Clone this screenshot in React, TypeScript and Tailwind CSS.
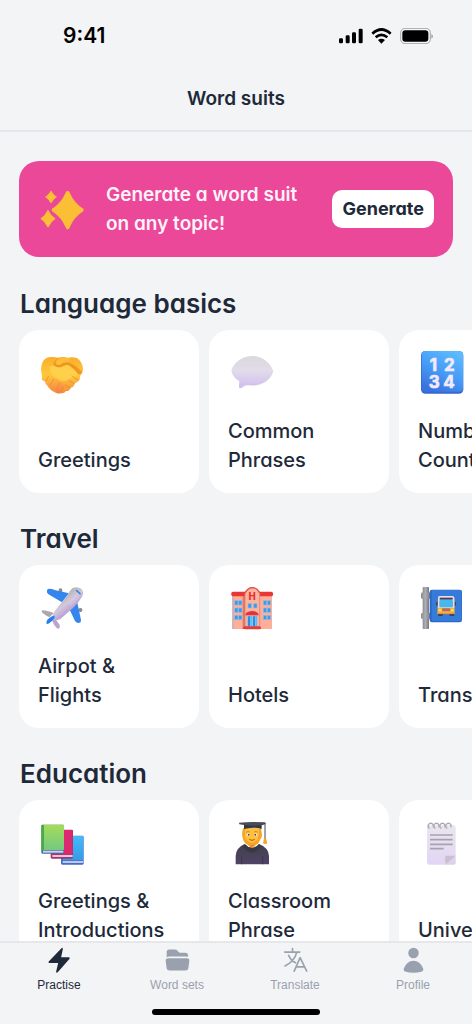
import type { ReactNode } from "react";

function Sparkles() {
  const star = (cx: number, cy: number, w: number, h: number) => {
    const a = w * 0.4;
    const b = h * 0.4;
    return `M${cx} ${cy - h}Q${cx + w * 0.1} ${cy - h} ${cx + w * 0.16} ${cy - h * 0.84}Q${cx + a} ${cy - b} ${cx + w * 0.86} ${cy - h * 0.13}Q${cx + w} ${cy - h * 0.08} ${cx + w} ${cy}Q${cx + w} ${cy + h * 0.08} ${cx + w * 0.86} ${cy + h * 0.13}Q${cx + a} ${cy + b} ${cx + w * 0.16} ${cy + h * 0.84}Q${cx + w * 0.1} ${cy + h} ${cx} ${cy + h}Q${cx - w * 0.1} ${cy + h} ${cx - w * 0.16} ${cy + h * 0.84}Q${cx - a} ${cy + b} ${cx - w * 0.86} ${cy + h * 0.13}Q${cx - w} ${cy + h * 0.08} ${cx - w} ${cy}Q${cx - w} ${cy - h * 0.08} ${cx - w * 0.86} ${cy - h * 0.13}Q${cx - a} ${cy - b} ${cx - w * 0.16} ${cy - h * 0.84}Q${cx - w * 0.1} ${cy - h} ${cx} ${cy - h}Z`;
  };
  return (
    <svg viewBox="114 105 144 144" className="size-12 shrink-0" fill="#fbbf35" aria-hidden="true">
      <path d={star(203, 180, 48, 58)} />
      <path d={star(153, 141, 17, 19)} />
      <path d={star(144, 206, 22, 26)} />
    </svg>
  );
}

function Handshake() {
  return (
    <svg viewBox="114 207 144 144" className="size-12" aria-hidden="true">
      <defs>
        <linearGradient id="hand" x1="0" y1="0" x2="0" y2="1">
          <stop offset="0" stopColor="#f8ad2a" />
          <stop offset="0.5" stopColor="#ffc83d" />
          <stop offset="1" stopColor="#f58a3c" />
        </linearGradient>
        <linearGradient id="finger" gradientUnits="userSpaceOnUse" x1="155" y1="285" x2="165" y2="340">
          <stop offset="0" stopColor="#ffc63a" />
          <stop offset="1" stopColor="#f77d4b" />
        </linearGradient>
      </defs>
      <path fill="url(#hand)" d="M145 232Q158 229 174 233Q188 229 203 233Q220 229 232 235Q248 248 249 267Q249 280 240 288Q242 297 235 303Q231 309 224 309Q223 322 212 323Q208 334 198 333Q193 341 184 340Q174 342 167 338Q158 336 151 328Q142 322 137 306Q126 303 126 287Q120 266 127 248Q134 235 145 232Z" />
      <path fill="#ffd34f" d="M149 260Q163 253 182 263L202 253L232 276Q231 292 212 294Q194 309 174 298Q150 286 149 260Z" opacity="0.8" />
      <g stroke="url(#finger)" strokeWidth="15" strokeLinecap="round">
        <path d="M139 284L133 295" />
        <path d="M152 293L144 308" />
        <path d="M168 303L157 322" />
        <path d="M183 316L175 331" />
      </g>
      <g stroke="#e8822c" strokeWidth="2.5" strokeLinecap="round" fill="none" opacity="0.8">
        <path d="M146 288L138 303" />
        <path d="M161 297L150 316" />
        <path d="M178 308L167 329" />
        <path d="M191 321L184 336" />
        <path d="M196 315L211 324" />
        <path d="M207 302L224 311" />
        <path d="M216 288L236 301" />
      </g>
      <path fill="#f19b25" d="M193 246Q217 244 247 275Q242 285 235 283Q219 263 204 255Q193 254 184 260Q171 265 162 256Q158 246 171 237Q175 233 182 234L177 240Q182 248 193 246Z" />
      <path fill="#ffbd35" d="M180 235Q195 231 204 234Q214 240 204 247Q190 246 180 254Q169 257 167 249Q168 240 180 235Z" />
      <path fill="none" stroke="#e08a20" strokeWidth="2" strokeLinecap="round" d="M161 249Q168 263 182 258Q193 249 205 250Q226 260 239 279" />
    </svg>
  );
}

function SpeechBubble() {
  return (
    <svg viewBox="24 57 144 144" className="size-12" aria-hidden="true">
      <defs>
        <linearGradient id="bubble" x1="0" y1="0" x2="0" y2="1">
          <stop offset="0" stopColor="#d9d9dc" />
          <stop offset="0.45" stopColor="#e2dcea" />
          <stop offset="1" stopColor="#d0bcef" />
        </linearGradient>
      </defs>
      <path fill="url(#bubble)" d="M97 78C125 78 149 96 159 121C154 149 128 166 97 166C88 166 80 164 74 167Q65 175 58 175Q56 172 58 154Q38 142 34 122C43 94 69 78 97 78Z" />
      <path fill="none" stroke="#bfb4cf" strokeWidth="2" opacity="0.5" d="M159 122C153 149 128 166 97 166Q82 163 74 167" />
    </svg>
  );
}

function Numbers() {
  return (
    <svg viewBox="594 57 144 144" className="size-12" aria-hidden="true">
      <defs>
        <linearGradient id="numbers" x1="0.8" y1="0" x2="0.3" y2="1">
          <stop offset="0" stopColor="#5dbcff" />
          <stop offset="0.55" stopColor="#459af6" />
          <stop offset="1" stopColor="#3a72dd" />
        </linearGradient>
      </defs>
      <rect x="603" y="63" width="127" height="128" rx="13" fill="#3568d0" />
      <rect x="605" y="63" width="124" height="122" rx="12" fill="url(#numbers)" />
      <g fill="#f3eaff" stroke="#f3eaff" strokeWidth="2" strokeLinejoin="round" fontFamily="Inter, sans-serif" fontWeight="700" fontSize="51" textAnchor="middle">
        <text x="640" y="122">1</text>
        <text x="688" y="122">2</text>
        <text x="643" y="173">3</text>
        <text x="687" y="173">4</text>
      </g>
    </svg>
  );
}

function Airplane() {
  return (
    <svg viewBox="54 42 144 144" className="size-12" aria-hidden="true">
      <defs>
        <linearGradient id="fuselage" x1="0.3" y1="0.3" x2="0.6" y2="0.7">
          <stop offset="0" stopColor="#b5b3b9" />
          <stop offset="0.5" stopColor="#d3c8dd" />
          <stop offset="1" stopColor="#b9a0d2" />
        </linearGradient>
      </defs>
      <rect x="116" y="55" width="11" height="13" rx="5" fill="#8d8992" />
      <rect x="175" y="114" width="12" height="12" rx="5" fill="#8d8992" />
      <path fill="#3386ee" d="M84 57Q92 55 104 60L147 70L126 97L89 75Q79 69 81 62Q82 58 84 57Z" />
      <path fill="#3386ee" d="M171 93L183 150Q184 157 177 159Q170 160 165 153L148 117Z" />
      <path fill="#aaa8ae" d="M67 121Q76 120 101 129L88 142Q66 131 65 124Z" />
      <path fill="#b9a4cc" d="M104 143L119 165Q121 176 114 176Q106 175 96 151Z" />
      <path fill="url(#fuselage)" d="M158 54Q173 48 184 56Q193 65 187 79Q177 97 160 113L121 147Q104 155 98 147Q94 137 104 124L141 77Q149 61 158 54Z" />
      <path fill="#2680ec" d="M104 137Q106 143 98 151Q88 162 81 162Q77 159 82 149Q94 137 104 137Z" />
      <path stroke="#3688df" strokeWidth="5" strokeLinecap="round" d="M170 62L180 71" />
      <path stroke="#ece6f3" strokeWidth="2.5" strokeDasharray="3 4" d="M169 78L146 104" />
      <path stroke="#ece6f3" strokeWidth="2.5" strokeDasharray="3 4" d="M175 82L151 108" />
    </svg>
  );
}

function Hotel() {
  const windows = [
    [74, 92], [86, 92], [74, 114], [86, 114], [74, 136], [86, 136],
    [160, 92], [172, 92], [160, 114], [172, 114], [160, 136], [172, 136],
    [114, 101], [131, 101],
  ];
  return (
    <svg viewBox="54 42 144 144" className="size-12" aria-hidden="true">
      <path fill="#ffae99" d="M67 75H186V177H67Z" />
      <path fill="#b9b0be" d="M67 79H71V177H67Z" />
      <rect x="64" y="65" width="125" height="14" rx="5" fill="#e63937" />
      <path fill="#df7763" d="M98 78H106V177H98Z" />
      <path fill="#ffb39d" stroke="#dd756a" strokeWidth="2" d="M105 177V70Q113 53 127 53Q142 53 149 70V177Z" />
      <path fill="none" stroke="#e24a48" strokeWidth="4" d="M105 69Q113 53 127 53Q142 53 149 69" />
      <text x="126" y="91" textAnchor="middle" fontFamily="Inter, sans-serif" fontSize="29" fontWeight="800" fill="#e52f37">H</text>
      {windows.map(([x, y]) => (
        <rect key={`${x}-${y}`} x={x} y={y} width="10" height="13" fill="#399aee" stroke="#93b9dd" strokeWidth="2" />
      ))}
      <path fill="#c5b1cf" d="M110 136H143V172H110Z" />
      <path fill="#288de3" d="M114 139H125V169H114ZM129 139H140V169H129Z" />
      <path fill="#5fcbf5" d="M120 139H125V169H120ZM135 139H140V169H135Z" />
      <path fill="#e23338" d="M106 136Q107 124 126 123Q145 124 146 136Z" />
      <path fill="#e83a3b" d="M102 169H151L154 177H98Z" />
    </svg>
  );
}

function BusStop() {
  return (
    <svg viewBox="78 42 144 144" className="size-12" aria-hidden="true">
      <defs>
        <linearGradient id="pole" x1="0" y1="0" x2="1" y2="0">
          <stop offset="0" stopColor="#8c8a91" />
          <stop offset="0.45" stopColor="#b0afb5" />
          <stop offset="1" stopColor="#77757d" />
        </linearGradient>
      </defs>
      <rect x="92" y="51" width="19" height="126" rx="2" fill="url(#pole)" />
      <rect x="87" y="67" width="29" height="20" rx="5" fill="url(#pole)" />
      <rect x="87" y="128" width="29" height="19" rx="5" fill="url(#pole)" />
      <rect x="113" y="59" width="97" height="98" rx="7" fill="#2869c8" />
      <rect x="119" y="60" width="90" height="93" rx="5" fill="#367bda" />
      <rect x="132" y="95" width="60" height="13" rx="4" fill="#414759" />
      <rect x="138" y="125" width="15" height="13" rx="4" fill="#364158" />
      <rect x="172" y="125" width="15" height="13" rx="4" fill="#364158" />
      <path fill="#f3b23f" d="M143 78H181Q186 78 187 84L188 132H136L138 84Q138 78 143 78Z" />
      <path fill="#eadcf3" d="M143 78H181Q186 78 187 84V113H138V84Q138 78 143 78Z" />
      <rect x="143" y="83" width="39" height="6" fill="#39445e" />
      <rect x="142" y="90" width="41" height="22" rx="3" fill="#43b9ef" />
      <rect x="150" y="115" width="25" height="9" rx="3" fill="#b46c63" />
      <path stroke="#ffe16c" strokeWidth="6" strokeLinecap="round" d="M142 121H146M179 121H183" />
      <path stroke="#e58a38" strokeWidth="3" d="M136 131H188" />
    </svg>
  );
}

function Books() {
  return (
    <svg viewBox="54 28 144 144" className="size-12" aria-hidden="true">
      <defs>
        <linearGradient id="greenBook" x1="0" y1="0" x2="0" y2="1">
          <stop offset="0" stopColor="#a5dc58" />
          <stop offset="1" stopColor="#72c982" />
        </linearGradient>
        <linearGradient id="blueBook" x1="0" y1="0" x2="0" y2="1">
          <stop offset="0" stopColor="#42bbfa" />
          <stop offset="1" stopColor="#359be8" />
        </linearGradient>
      </defs>
      <rect x="123" y="78" width="68" height="87" rx="4" fill="#3d72c9" />
      <rect x="129" y="79" width="60" height="73" fill="url(#blueBook)" />
      <rect x="128" y="154" width="61" height="6" fill="#cfc0e9" />
      <rect x="92" y="60" width="67" height="87" rx="4" fill="#ad3562" />
      <rect x="98" y="61" width="59" height="73" fill="#db2871" />
      <rect x="97" y="136" width="61" height="6" fill="#dbc8eb" />
      <rect x="64" y="45" width="68" height="87" rx="4" fill="#3c709d" />
      <rect x="64" y="45" width="68" height="76" rx="3" fill="url(#greenBook)" />
      <rect x="64" y="46" width="8" height="76" fill="#4ca94b" />
      <rect x="69" y="123" width="61" height="6" fill="#dacbea" />
    </svg>
  );
}

function Graduate() {
  return (
    <svg viewBox="54 28 144 144" className="size-12" aria-hidden="true">
      <defs>
        <linearGradient id="gown" x1="0" y1="0" x2="0" y2="1">
          <stop offset="0" stopColor="#42404b" />
          <stop offset="1" stopColor="#4f4367" />
        </linearGradient>
      </defs>
      <path fill="#f6a326" d="M99 56H153L156 77Q155 88 150 90Q147 102 137 106L126 119L113 105Q101 99 99 87Q94 78 99 56Z" />
      <path fill="url(#gown)" d="M104 103Q112 113 126 115Q140 113 147 103Q176 114 177 139V164H77V139Q78 114 104 103Z" />
      <path fill="#383943" d="M104 103Q112 113 126 115Q140 113 147 103L151 113Q143 127 126 129Q108 127 100 113Z" />
      <path fill="#ed8b32" d="M118 105H134L127 116Z" />
      <path stroke="#34323f" strokeWidth="2" d="M95 141V164M158 140V164" />
      <path fill="#ffc139" d="M106 58H146Q148 76 143 89Q137 99 126 99Q110 98 104 82Z" />
      <circle cx="115" cy="75" r="5" fill="#fff3e5" />
      <circle cx="137" cy="75" r="5" fill="#fff3e5" />
      <circle cx="116" cy="75" r="3" fill="#6b3c37" />
      <circle cx="136" cy="75" r="3" fill="#6b3c37" />
      <path fill="none" stroke="#b24b38" strokeWidth="3" strokeLinecap="round" d="M119 90Q126 95 133 90" />
      <path fill="none" stroke="#a4632c" strokeWidth="2" d="M109 68Q114 64 119 67M133 67Q138 64 143 68" />
      <path fill="#35363f" d="M102 44H155V58Q138 51 102 58Z" />
      <path fill="#4a4b54" d="M87 39Q119 36 165 38L168 42Q157 48 147 47Q116 50 88 44Z" />
      <path stroke="#464650" strokeWidth="3" d="M165 42V90" />
      <path fill="#f4a52a" d="M162 86H168L172 101Q166 105 159 101Z" />
    </svg>
  );
}

function Notepad() {
  return (
    <svg viewBox="78 28 144 144" className="size-12" aria-hidden="true">
      <defs>
        <linearGradient id="paper" x1="0" y1="0" x2="0" y2="1">
          <stop offset="0" stopColor="#e9e6ee" />
          <stop offset="1" stopColor="#e2d5f5" />
        </linearGradient>
      </defs>
      <path fill="url(#paper)" d="M111 46H184Q191 47 191 53V139L163 165H111Q105 164 105 158V52Q105 46 111 46Z" />
      <path fill="#c8c1cf" d="M160 138H191L162 165Q156 151 160 138Z" />
      <path fill="#ddd1ed" d="M191 139V161Q190 165 185 165H162Z" />
      <path stroke="#a5a3ad" strokeWidth="5" d="M114 76H182M114 90H182M114 104H182M114 117H155" />
      <g fill="none" stroke="#aaa8ae" strokeWidth="4">
        <path d="M113 56A8 8 0 1 1 123 53" />
        <path d="M130 56A8 8 0 1 1 140 53" />
        <path d="M148 56A8 8 0 1 1 158 53" />
        <path d="M166 56A8 8 0 1 1 176 53" />
      </g>
    </svg>
  );
}

type Suit = { title: string; icon: ReactNode };
const sections: { title: string; suits: Suit[] }[] = [
  {
    title: "Language basics",
    suits: [
      { title: "Greetings", icon: <Handshake /> },
      { title: "Common Phrases", icon: <SpeechBubble /> },
      { title: "Numbers & Counting", icon: <Numbers /> },
    ],
  },
  {
    title: "Travel",
    suits: [
      { title: "Airpot & Flights", icon: <Airplane /> },
      { title: "Hotels", icon: <Hotel /> },
      { title: "Transport", icon: <BusStop /> },
    ],
  },
  {
    title: "Education",
    suits: [
      { title: "Greetings & Introductions", icon: <Books /> },
      { title: "Classroom Phrase", icon: <Graduate /> },
      { title: "University", icon: <Notepad /> },
    ],
  },
];

function StatusBar() {
  return (
    <div className="flex h-[71px] shrink-0 items-center justify-between pr-[39px] pl-[63px] text-black">
      <time className="text-[21px] font-semibold">9:41</time>
      <div className="flex items-center gap-2">
        <svg viewBox="0 0 72 48" className="h-4 w-6" aria-hidden="true">
          <rect x="0" y="31" width="12" height="15" rx="4" />
          <rect x="20" y="22" width="12" height="24" rx="4" />
          <rect x="39" y="13" width="12" height="33" rx="4" />
          <rect x="59" y="2" width="12" height="44" rx="4" />
        </svg>
        <svg viewBox="0 0 63 48" className="h-4 w-[21px]" fill="none" stroke="black" strokeWidth="8" aria-hidden="true">
          <path d="M4 17Q31 -8 59 17" />
          <path d="M14 28Q31 13 49 28" />
          <path fill="black" stroke="none" d="M21 36Q31 28 42 36L31 47Z" />
        </svg>
        <svg viewBox="0 0 99 48" className="h-4 w-[33px]" aria-hidden="true">
          <rect x="2" y="1" width="89" height="46" rx="13" fill="none" stroke="#a5a6ae" strokeWidth="3" />
          <rect x="7" y="7" width="78" height="34" rx="9" />
          <path fill="#a5a6ae" d="M94 18Q99 20 99 25Q99 30 94 32Z" />
        </svg>
      </div>
    </div>
  );
}

const tabs: { label: string; icon: ReactNode }[] = [
  { label: "Practise", icon: <path d="M44 3Q48 0 48 6L43 31H66Q71 31 68 36L34 75Q27 81 28 73L34 48H8Q2 48 6 43Z" /> },
  {
    label: "Word sets",
    icon: <path d="M5 31V15Q5 7 13 7H30Q35 7 38 11L43 16Q45 17 49 17H62Q70 17 70 25V29Q68 28 63 28H14Q8 28 5 31ZM10 34H66Q74 34 74 41L71 64Q70 71 62 71H14Q6 71 5 64L2 41Q2 34 10 34Z" />,
  },
  {
    label: "Translate",
    icon: (
      <path fill="none" stroke="currentColor" strokeWidth="5" strokeLinecap="round" strokeLinejoin="round" d="M5 15H51M29 4V15M42 15Q35 43 6 57M17 25Q26 43 38 47M34 73L52 32L72 73M41 60H65" />
    ),
  },
  {
    label: "Profile",
    icon: (
      <>
        <circle cx="38" cy="18" r="16" />
        <path d="M38 41Q58 41 67 64Q70 70 64 74Q38 82 12 74Q6 70 9 64Q18 41 38 41Z" />
      </>
    ),
  },
];

export default function App() {
  return (
    <div className="flex h-screen flex-col overflow-hidden bg-[#f3f4f6] font-[Inter,sans-serif] text-gray-800 [font-feature-settings:'cv11']">
      <StatusBar />
      <header className="flex h-[61px] shrink-0 items-center justify-center border-b-2 border-gray-200 pb-[2px]">
        <h1 className="text-[19px] font-semibold">Word suits</h1>
      </header>
      <main className="min-h-0 flex-1 overflow-y-auto pt-[29px] [scrollbar-width:none]">
        <section className="mx-[19px] flex h-24 items-center rounded-[20px] bg-[#ec4899] px-[19px]">
          <Sparkles />
          <p className="ml-5 max-w-[200px] text-[19px] leading-[29px] font-semibold text-white/95">Generate a word suit on any topic!</p>
          <button type="button" className="ml-auto h-[38px] rounded-[10px] bg-white px-[10px] text-lg font-bold">Generate</button>
        </section>
        <div className="mt-[29px] flex flex-col gap-7">
          {sections.map((section) => (
            <section key={section.title}>
              <h2 className="mb-2 px-5 text-[26px] leading-9 font-semibold">{section.title}</h2>
              <div className="flex gap-[10px] overflow-x-auto px-[19px] [scrollbar-width:none]">
                {section.suits.map((suit) => (
                  <a key={suit.title} href="#suit" className="flex h-[163px] w-[180px] shrink-0 flex-col justify-between rounded-[20px] bg-white px-[19px] pt-[19px] pb-[18px]">
                    {suit.icon}
                    <span className="max-w-[130px] text-xl leading-[29px] font-medium">{suit.title}</span>
                  </a>
                ))}
              </div>
            </section>
          ))}
        </div>
      </main>
      <footer className="shrink-0 border-t-2 border-gray-200">
        <nav className="grid grid-cols-4 pt-1">
          {tabs.map((tab, i) => (
            <a
              key={tab.label}
              href="#tab"
              aria-current={i === 0 ? "page" : undefined}
              className={`flex flex-col items-center gap-1 font-['Liberation_Sans',sans-serif] text-xs leading-4 ${i === 0 ? "text-gray-800" : "text-gray-400"}`}
            >
              <svg viewBox="0 0 76 78" className="h-[26px] w-[25px]" fill="currentColor" aria-hidden="true">
                {tab.icon}
              </svg>
              {tab.label}
            </a>
          ))}
        </nav>
        <div className="mx-auto mt-4 mb-[9px] h-[6px] w-[168px] rounded-full bg-black" />
      </footer>
    </div>
  );
}
